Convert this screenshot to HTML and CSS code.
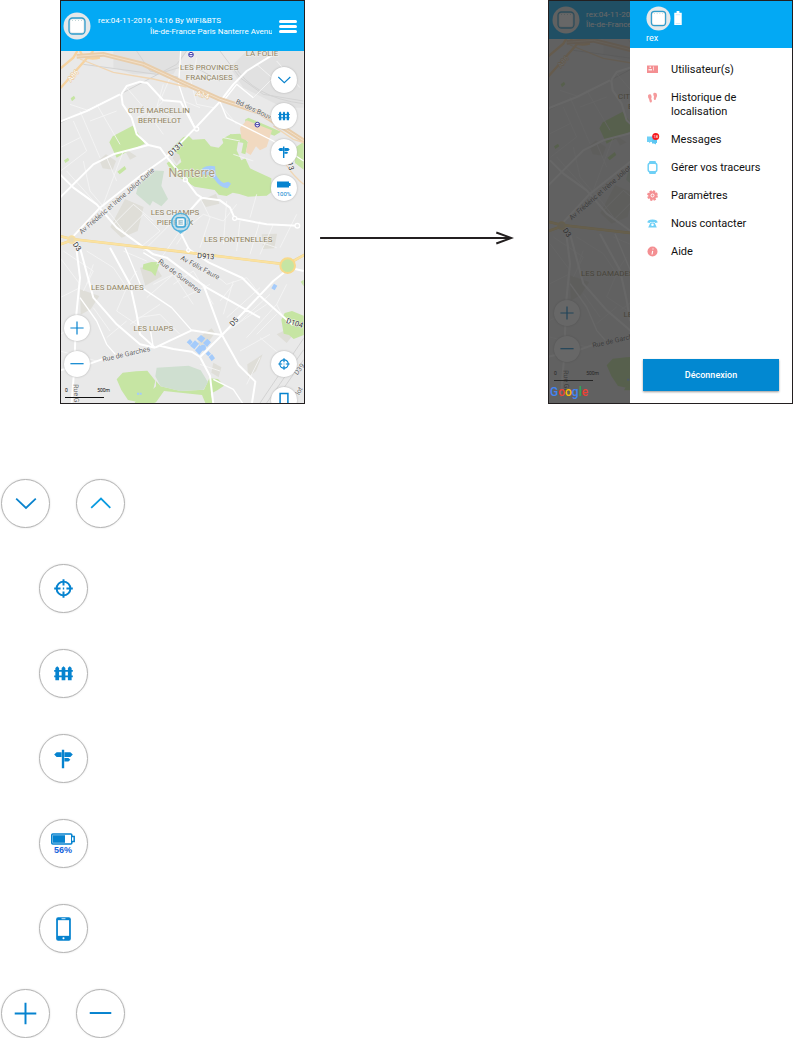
FILE: index.html
```html
<!DOCTYPE html>
<html lang="fr">
<head>
<meta charset="utf-8">
<meta name="viewport" content="width=device-width, initial-scale=1">
<title>rex</title>
<link rel="stylesheet" href="styles.css">
</head>
<body>
<svg class="defs" aria-hidden="true">
  <defs>
    <g id="tracker">
      <circle cx="14" cy="14" r="13.5" fill="#e4e8ea"/>
      <rect x="6" y="6" width="16" height="16" rx="3.500" fill="#dfe6e9" stroke="#2d9ccc" stroke-width="1.300"/>
      <rect x="7.500" y="7.500" width="13" height="13" rx="2" fill="#fff"/>
      <path d="M9 8.500h10" stroke="#9bb" stroke-width=".6" stroke-dasharray="1 2"/>
    </g>
    <g id="down"><path d="M15.500 19.500l10 9.500l10-9.500" fill="none" stroke="#0a83cd" stroke-width="1.800"/></g>
    <g id="up"><path d="M15.500 29l10-9.500l9.500 9.500" fill="none" stroke="#0a9be0" stroke-width="1.800"/></g>
    <g id="target" fill="none" stroke="#0683cf" stroke-width="2"><circle cx="25" cy="24.500" r="7"/><path d="M25 15v6.500M25 27.500v6.500M15.500 24.500h6.500M28 24.500h6.500M24.300 24.500h1.400"/></g>
    <g id="fence" fill="#0683cf"><path d="M16.700 31.500V19l1.900-2l1.900 2V31.500zM23.100 31.500V19l1.900-2l1.900 2V31.500zM29.500 31.500V19l1.900-2l1.900 2V31.500z"/><path d="M15.500 21h19v1.800h-19zM15.500 26.500h19v1.800h-19z"/></g>
    <g id="sign"><path d="M18 18h5v5h-5l-2.500-2.500zM26 18h6l2.500 2.500L32 23h-6zM26 24h4l2 1.800l-2 1.800h-4zM23.300 15.500h2.400V34.500h-2.400z" fill="#0683cf"/></g>
    <g id="phone"><rect x="17.500" y="13" width="15" height="24" rx="2" fill="#0683cf"/><path d="M19.300 16h11.400v16H19.300z" fill="#fff"/><path d="M23 14.500h4" stroke="#fff" stroke-width=".8"/><rect x="24" y="33.500" width="2" height="2" rx=".8" fill="#fff"/></g>
    <g id="plus"><path d="M25 13.500v22M14 24.500h22" stroke="#0683cf" stroke-width="2"/></g>
    <g id="minus"><path d="M14 24h22" stroke="#0683cf" stroke-width="2"/></g>

    <g id="map">
      <path d="M0 100H760V1260H0z" fill="#e9e9e9"/>
      <g transform="translate(15 153)">
        <path d="M160 0h220l-40 70-120 0-60-20zM560 0h170v170l-60 0-120-60-40-60z" fill="#e1e1e1"/>
        <g fill="#dfded8">
          <path d="M118 326l20-16 30 20-10 26-30-4zM195 444l56 24-18 72-48 20-34-32zM240 650l44-8 22 34-50 28zM60 715l58 20-26 40-30 16zM415 860l40-28 10 14-30 40-20-4zM562 940l46-30-20 50-24 20zM460 935l24 14-8 30-22-14zM605 550l46-2-8 44-34 2zM424 448l44-20 10 30-40 10zM650 850l40-20 14 16-24 30zM190 290l40 26-20 10zM350 290l20 20-20 30-12-18z"/>
        </g>
        <g fill="#c6e5a3">
          <path d="M148 274l10-18 60-32 16 22 20 32-56 26-28 16zM32 142l10-8 4 8-10 9zM12 328l12-8 4 8-12 8zM172 362l22-17 5 9-20 16z"/>
          <path d="M370 258l16-4 12 12 36-2 18 22 24 4 14-14-4-12 26-14 24 14-6 34 14 30 12-6 14 30 64 30 0 42-14 10-56 3-26-8-20-4-18 10-24-4-12-14-60-10-66-40-18-30 10-8 20 16 14-12-6-22-26-16z"/>
          <path d="M510 250l30-2 24 26-8 36-12-4 6-30-40-8zM705 290l26-18v84l-26-20zM555 206l10-6 98 42-20 12-84-32z"/>
          <path d="M250 640l24-7 26 1-8 22-6 20-12-14-26-8z"/>
          <path d="M664 806l10-20 22-6 35 14v58l-30 12-14-12-16-4z"/>
          <path d="M170 985l18-20 40-4 34-2 24 30-8 34-14 20-20 12-40-8-20-30zM288 990l14 16 60 14 70-4 16-34 26 2 18 20-20 14-20 10 8 28h-24l-10-24-114-12-24 34-16 6h-50l10-20 34-12 22-22z"/>
          <path d="M722 692l9-6v20z"/>
        </g>
        <path d="M268 358l44 2-8 44 20 40-20 22-26-16-8 14-42-36 6-22zM290 950l96-6 36 14 22 36-14 22-70 4-58-14-16-30z" fill="#cfdfd0"/>
        <path d="M540 230l20-22 76 30-16 50-20 10-12-12-16 26-14-8 6-34-20-8z" fill="#f1d9c0"/>
        <g fill="#a4cbfb">
          <path d="M427 352q14-12 38-6l2 24q8 18 24 26l14-4 8 6-10 14q-24-2-40-28l-16-12-22-2z"/>
          <path d="M634 712l8-14 10 6-8 14zM380 874l10-10 8 9-8 10zM390 884l15-16 12 10-14 17zM405 898l14-16 12 12-13 17zM410 864l13-12 13 10-11 13zM429 876l13-13 11 11-12 14zM437 908l8-8 8 8-8 8zM446 918l10-9 9 13-10 9z"/>
          <circle cx="429" cy="890" r="9"/><path d="M231 1025h6v6h-6zM239 1025h6v6h-6z"/>
        </g>
        <g fill="none" stroke="#d3d3d3" stroke-width="3">
          <path d="M0 216L180 130 350 40 380 0M70 40l220 30 100-30 90 50M480 0l60 80 70 50 120 20M520 40q60 100 210 118M230 0l40 60 90 20M600 1056l131-194M620 1056l111-160M640 1056l91-130"/>
        </g>
        <g fill="none" stroke="#f5f5f5" stroke-width="2.500">
          <path d="M40 210l40 90-78 60M60 180l60 140M110 160l70 120M0 290l60-30M70 330l20 90 60 70M20 360l90 100M140 320l30 70M190 300l-60 160 60 80M140 480l40-30 60-60M160 520l60-60 60 50M190 550l60-60 50 50-60 50M250 600l110-110M290 640l70-100M340 480l50 40-40 60M420 440l-60 70M370 540l60-50 60 20 40-50M420 440l30 60-30 90M500 450l-10 130M540 510l-10 90M600 510l-30 100M560 560l90 30M640 520l-40 90M660 590l50-100M590 430l-20 70"/>
          <path d="M0 620l60 80M0 740l60-30M10 600l90 60-30 60M80 600l80 50 40 60-30 70 60 40M100 640l-20 60M190 600l70 30M230 660l-40 60M280 700l60-30 60 90M260 740l80-70M300 760l-90 60M340 700l60-40 60 100M370 740l80-40M440 650l60 50 60-20 40 50M480 750l40-50M500 800l100-90M520 830l110-100M560 860l90-100 20 40M500 840l120-80M540 900l90-50M590 850l60-60M600 860l60 50M360 850l-60-60-70 10M140 860l60-50M150 840l-50-70M0 850l60-30M0 900l110 30M520 690l-30 100M420 940l60 20M560 1000l40-80M680 700l-30 60"/>
          <path d="M200 110l60 70 50 70M230 200l60-30 20-70M300 180l60 30M310 150l-50 50M330 80l-30 70M390 80l20 80 50 10M370 150l50 20M410 20l-10 60M480 160l50 60M590 40l80 70 30-20M640 80l-60 60M650 30l70 80M30 160l60 20M90 210l80-30M490 260l50 10M520 310l60 20"/>
        </g>
        <g fill="none" stroke="#fff" stroke-linejoin="round">
          <path stroke-width="6" d="M-10 450L100 340 160 310 265 282 300 290 320 318 376 385 410 430 425 440 480 448 510 470 524 502 620 520 712 524M265 282L230 250 215 200 188 160 184 130 200 105 240 92 262 96 310 148 362 152 405 232M-10 216L80 180 180 130"/>
          <path stroke-width="6" d="M36 560L120 470 240 375 320 318 405 232 480 152 520 100 560 60 640 10M0 370l40 40 70 50 60 70 110 80 40 10 120 90 160 90M425 440L365 506M362 545l25 50 60 40 100 46 60 60 90 80M731 660L690 650 640 690 486 852 420 918M430 700l56 152 50 90 50 50-10 64M285 890L395 838 486 852M285 890L300 884 340 894 395 902 420 918 450 975 460 1060M285 890L240 850 230 790 210 700 150 590M285 890L240 880 170 820 100 740 60 590 36 565M-10 960L90 938 140 920M50 600l10 80-12 120-5 150-10 130"/>
          <path stroke-width="4" d="M60 740l50 70 30 70 26 30M195 590l50 120 90 60 60 68M280 890l-10-60M362 0l-6 100 30 90 19 42M480 152L500 200 640 270 731 330M490 150L530 100 580 140M460 985l60 30 30 45M250 605l50 30"/>
        </g>
        <g fill="none">
          <path d="M-15 130L100 0M-15 66L40 20 52 0M60 0q10 30 60 20" stroke="#f6d3a0" stroke-width="7"/>
          <path d="M50 16L130 10 250 40 380 100 480 145 600 185 740 275" stroke="#e8cdab" stroke-width="14"/>
          <path d="M50 16L130 10 250 40 380 100 480 145 600 185 740 275" stroke="#f3e0c8" stroke-width="3"/>
          <path d="M60 24l100 40 120 20 100 24M640 225l60 40 31 10M660 290q10 60 71 110" stroke="#f0d6b4" stroke-width="4"/>
          <path d="M-15 552L35 564 380 604 660 638 700 630 745 605M-15 586L35 568" stroke="#f0d48c" stroke-width="8"/>
          <path d="M-15 552L35 564 380 604 660 638 700 630 745 605M-15 586L35 568" stroke="#fbe2a0" stroke-width="6"/>
          <circle cx="683" cy="644" r="22" fill="#c6e5a3" stroke="#f8d98a" stroke-width="6"/>
          <circle cx="35" cy="566" r="10" fill="#e8dcb8" stroke="#f5dfa6" stroke-width="6"/>
        </g>
        <g fill="#e9e9e9" stroke="#fff" stroke-width="4"><circle cx="524" cy="502" r="6"/><circle cx="712" cy="524" r="7"/><circle cx="376" cy="386" r="6"/><circle cx="385" cy="598" r="5"/><circle cx="410" cy="234" r="6"/></g>
      </g>
      <g fill="#fff" stroke="#3a35a8" stroke-width="3"><circle cx="408" cy="164" r="7"/><path d="M402 164h12"/><circle cx="607" cy="374" r="7"/><path d="M601 374h12"/></g>
      <g class="district">
        <text x="621" y="168">LA FOLIE</text>
        <text x="463" y="210">LES PROVINCES</text><text x="463" y="241">FRANÇAISES</text>
        <text x="312" y="338">CITÉ MARCELLIN</text><text x="314" y="370">BERTHELOT</text>
        <text x="360" y="645">LES CHAMPS</text><text x="360" y="676">PIERREUX</text>
        <text x="550" y="727">LES FONTENELLES</text>
        <text x="187" y="870">LES DAMADES</text>
        <text x="295" y="993">LES LUAPS</text>
        <text class="city" x="410" y="532">Nanterre</text>
      </g>
      <g class="street">
        <text transform="translate(190 608) rotate(-41)">Av Frédéric et Irène Joliot Curie</text>
        <text transform="translate(432 809) rotate(28)">Av Félix Faure</text>
        <text transform="translate(370 834) rotate(37)">Rue de Suresnes</text>
        <text transform="translate(215 1069) rotate(-13)">Rue de Garches</text>
        <text transform="translate(57 1186) rotate(88)">Rue Ga</text>
        <text transform="translate(606 340) rotate(25)">Bd des Bouvets</text>
        <text transform="translate(738 1112) rotate(-52)">D39</text>
        <text transform="translate(738 1176) rotate(-62)">lot</text>
      </g>
      <g class="route">
        <text transform="translate(367 452) rotate(-42)">D131</text>
        <text transform="translate(60 744) rotate(55)">D3</text>
        <text transform="translate(452 776) rotate(4)">D913</text>
        <text transform="translate(542 970) rotate(-48)">D5</text>
        <text transform="translate(717 976) rotate(18)">D104</text>
        <text transform="translate(700 500) rotate(75)">13</text>
        <text class="motorway" transform="translate(60 232) rotate(-48)">A86</text>
        <text class="motorway" transform="translate(441 292) rotate(18)">A14</text>
      </g>
    </g>
  </defs>
</svg>

<main>
  <section class="screens">
    <div class="phone">
      <header class="topbar">
        <svg class="avatar" viewBox="0 0 28 28" aria-hidden="true"><use href="#tracker"/></svg>
        <div class="status"><p>rex:04-11-2016 14:16 By WIFI&amp;BTS</p><p class="address">Île-de-France Paris Nanterre Avenue</p></div>
        <button class="burger" aria-label="Menu"><span></span><span></span><span></span></button>
      </header>
      <div class="mapview">
        <svg class="map" viewBox="18 153 729 1056" preserveAspectRatio="xMidYMid slice">
          <use href="#map"/>
          <path d="M363 690h28l-14 12z" fill="#54b4dc" fill-opacity=".9"/>
          <circle cx="377" cy="667" r="27" fill="#a9d6ea" fill-opacity=".65" stroke="#4fb0dc" stroke-width="4"/>
          <rect x="363" y="653" width="28" height="28" rx="6" fill="none" stroke="#3ba5d6" stroke-width="4"/>
          <rect x="368" y="658" width="18" height="18" rx="2" fill="none" stroke="#fff" stroke-width="3"/>
        </svg>
        <div class="stack tools">
          <button class="round" aria-label="Dérouler"><svg viewBox="0 0 50 49"><use href="#down"/></svg></button>
          <button class="round" aria-label="Zones"><svg viewBox="0 0 50 49"><use href="#fence"/></svg></button>
          <button class="round" aria-label="Itinéraire"><svg viewBox="0 0 50 49"><use href="#sign"/></svg></button>
          <button class="round charge"><svg viewBox="0 0 14 7"><path d="M0 .5h12v1.500h1.500v3H12V6.500H0z" fill="#0683cf"/></svg><span>100%</span></button>
        </div>
        <div class="stack zoomer">
          <button class="round" aria-label="Zoom avant"><svg viewBox="0 0 50 49"><use href="#plus"/></svg></button>
          <button class="round" aria-label="Zoom arrière"><svg viewBox="0 0 50 49"><use href="#minus"/></svg></button>
        </div>
        <div class="stack locate">
          <button class="round" aria-label="Localiser"><svg viewBox="0 0 50 49"><use href="#target"/></svg></button>
          <button class="round" aria-label="Téléphone"><svg viewBox="0 0 50 49"><path d="M18.500 38V13.500h13V38" fill="none" stroke="#0683cf" stroke-width="2.500"/></svg></button>
        </div>
        <div class="scale"><span>0</span><span>500m</span></div>
      </div>
    </div>

    <svg class="arrow" viewBox="0 0 194 14" aria-hidden="true"><path d="M0 7h190" stroke="#231f20" stroke-width="2"/><path d="M176 1.500L191 7l-15 5.500" fill="none" stroke="#231f20" stroke-width="2"/></svg>

    <div class="phone drawer-open">
      <div class="behind">
        <header class="topbar">
          <svg class="avatar" viewBox="0 0 28 28" aria-hidden="true"><use href="#tracker"/></svg>
          <div class="status"><p>rex:04-11-2016 14:16</p><p>Île-de-France Paris</p></div>
        </header>
        <div class="mapview">
          <svg class="map" viewBox="12 159 243 1092" preserveAspectRatio="xMinYMin slice"><use href="#map"/></svg>
          <div class="stack zoomer">
            <button class="round" aria-label="Zoom avant"><svg viewBox="0 0 50 49"><use href="#plus"/></svg></button>
            <button class="round" aria-label="Zoom arrière"><svg viewBox="0 0 50 49"><use href="#minus"/></svg></button>
          </div>
          <div class="scale"><span>0</span><span>500m</span></div>
        </div>
        <div class="shade"></div>
        <div class="google"><span class="b">G</span><span class="r">o</span><span class="y">o</span><span class="b">g</span><span class="g">l</span><span class="r">e</span></div>
      </div>
      <aside class="drawer">
        <header class="profile">
          <div class="badges">
            <svg class="avatar" viewBox="0 0 28 28" aria-hidden="true"><use href="#tracker"/></svg>
            <svg class="cell" viewBox="0 0 8 15" aria-hidden="true"><path d="M2.500 0h3v2H8v13H0V2h2.500z" fill="#fff"/><path d="M1.500 4h5M1.500 13.500h5" stroke="#b5dff5" stroke-width=".7"/></svg>
          </div>
          <p>rex</p>
        </header>
        <nav class="menu">
          <a href="#u"><svg viewBox="0 0 11 11"><path d="M0 1.500h11v7.500H0z" fill="#f48f92"/><path d="M2.500 2.500h1.500v1.500H2.500zM1.500 5h3.500v1.500H1.500zM6 2.500h.8v4H6z" fill="#fff" fill-opacity=".8"/></svg>Utilisateur(s)</a>
          <a href="#h"><svg viewBox="0 0 11 11"><g fill="#f59a9c"><path d="M1 3.500q1-2 3-1q1 2 .2 4l.8 2.500q-.6 2.500-2.200 1L2 7Q.8 5.500 1 3.500zM6.500 1q2-1 3.300.8q.8 2.200-.6 4.200L8.500 8Q6.800 8.500 6.700 6.500l.3-2Q5.800 2.500 6.500 1z"/></g></svg>Historique de localisation</a>
          <a href="#m"><svg viewBox="0 0 11 11"><path d="M0 2.500h8v5.500H3.500L2 9V8H0z" fill="#6fd0f6"/><path d="M5 5h5v4H9v1.500L7 9.500H5z" fill="#5cc6f2"/><circle cx="8.700" cy="2.600" r="3.500" fill="#f5191c"/><text class="count" x="8.700" y="4">18</text></svg>Messages</a>
          <a href="#t"><svg viewBox="0 0 11 11"><path d="M2.500-1h6l.8 2.500H1.700zM2.500 12h6l.8-2.500H1.700z" fill="#6fd0f6"/><rect x="1.200" y="1.200" width="8.600" height="8.600" rx="2" fill="#fff" stroke="#6fd0f6" stroke-width="1.500"/></svg>Gérer vos traceurs</a>
          <a href="#p"><svg viewBox="0 0 11 11"><circle cx="5.500" cy="5.500" r="4.500" fill="none" stroke="#f48f92" stroke-width="1.800" stroke-dasharray="2.200 1.330"/><circle cx="5.500" cy="5.500" r="4.200" fill="#f48f92"/><circle cx="5.500" cy="5.500" r="1.500" fill="#f48f92" stroke="#fff"/></svg>Paramètres</a>
          <a href="#n"><svg viewBox="0 0 11 11"><path d="M.3 4.500Q.5 1.500 5.500 1.500t5.200 3L8 5V4H3v1zM3.500 4.500h4l2.300 5H1.200z" fill="#6fd0f6"/><circle cx="5.500" cy="6.800" r="1.300" fill="#fff"/></svg>Nous contacter</a>
          <a href="#a"><svg viewBox="0 0 11 11"><circle cx="5.500" cy="5.500" r="5" fill="#f48f92"/><path d="M6 2.500v1M5.700 4.800L5 8.500" stroke="#fff" stroke-width="1.100"/></svg>Aide</a>
        </nav>
        <button class="logout">Déconnexion</button>
      </aside>
    </div>
  </section>

  <section class="legend">
    <div class="pair"><div class="disc"><svg viewBox="0 0 50 49"><use href="#down"/></svg></div><div class="disc"><svg viewBox="0 0 50 49"><use href="#up"/></svg></div></div>
    <div class="pair"><div class="disc"><svg viewBox="0 0 50 49"><use href="#target"/></svg></div></div>
    <div class="pair"><div class="disc"><svg viewBox="0 0 50 49"><use href="#fence"/></svg></div></div>
    <div class="pair"><div class="disc"><svg viewBox="0 0 50 49"><use href="#sign"/></svg></div></div>
    <div class="pair"><div class="disc level"><svg viewBox="0 0 24 12"><rect x=".8" y="1" width="20" height="10" rx="1" fill="#fff" stroke="#0683cf" stroke-width="1.600"/><path d="M2 2.200h12v7.600H2z" fill="#0683cf"/><path d="M21 3.500h2.200v5H21" fill="#fff" stroke="#0683cf" stroke-width="1.500"/></svg><span>56%</span></div></div>
    <div class="pair"><div class="disc"><svg viewBox="0 0 50 49"><use href="#phone"/></svg></div></div>
    <div class="pair"><div class="disc"><svg viewBox="0 0 50 49"><use href="#plus"/></svg></div><div class="disc"><svg viewBox="0 0 50 49"><use href="#minus"/></svg></div></div>
  </section>
</main>
</body>
</html>
```

FILE: styles.css
```css
* { box-sizing: border-box; }
body { margin: 0; background: #fff; font-family: Roboto, "Liberation Sans", sans-serif; color: #1c1c1c; }
p { margin: 0; }
button { border: 0; padding: 0; font: inherit; cursor: pointer; }
.defs { position: absolute; width: 0; height: 0; }

.screens { display: grid; grid-template-columns: minmax(0, 245fr) minmax(0, 243fr) minmax(0, 245fr); padding-left: 60px; align-items: start; }
.phone { display: flex; flex-direction: column; aspect-ratio: 245 / 404; border: 1px solid #231f20; overflow: hidden; }
.arrow { display: block; align-self: center; margin-left: 15px; width: 80%; margin-top: 72px; }

.topbar { display: flex; align-items: center; gap: 7px; height: 50px; flex: none; padding: 0 7px 0 2px; background: #03a9f4; color: #fff; overflow: hidden; }
.avatar { width: 28px; height: 28px; flex: none; display: block; }
.status { flex: 1; min-width: 0; font-size: 8px; line-height: 11px; white-space: nowrap; overflow: hidden; }
.address { margin-left: 52px; overflow: hidden; }
.burger { display: flex; flex-direction: column; gap: 2px; width: 18px; background: none; }
.burger span { height: 3px; border-radius: 2px; background: #fff; }

.mapview { position: relative; flex: 1; min-height: 0; overflow: hidden; background: #e8e8e8; }
.map { display: block; width: 100%; height: 100%; }
.district text { font-size: 24px; fill: #8f8261; text-anchor: middle; paint-order: stroke; stroke: #f1f1ef; stroke-width: 3px; }
.district .city { font-size: 36px; fill: #a89a7d; }
.street text { font-size: 21px; fill: #666; text-anchor: middle; paint-order: stroke; stroke: #f4f4f4; stroke-width: 3px; }
.route text { font-size: 22px; fill: #333; text-anchor: middle; paint-order: stroke; stroke: #f4f4f4; stroke-width: 3px; }
.route .motorway { fill: #fff; stroke: #e9c899; }

.stack { position: absolute; display: flex; flex-direction: column; gap: 10px; }
.tools { top: 16px; right: 7px; }
.zoomer { left: 3px; bottom: 26px; }
.locate { right: 7px; bottom: -10px; }
.round { display: flex; flex-direction: column; align-items: center; justify-content: center; width: 26px; height: 26px; border-radius: 50%; background: #fff; box-shadow: 0 0 2px #aaa; }
.round svg { width: 30px; height: 30px; flex: none; display: block; stroke-linecap: butt; }
.charge .level, .charge svg { width: 14px; height: 7px; margin-top: 3px; }
.charge span { font-size: 6px; line-height: 8px; margin-top: 2px; color: #0683cf; }
.scale { position: absolute; left: 4px; bottom: 5px; width: 39px; height: 12px; display: flex; justify-content: space-between; border-bottom: 1px solid #111; font-size: 5px; line-height: 8px; color: #111; }
.scale span:last-child { margin-right: -6px; }

.drawer-open { display: grid; grid-template-columns: minmax(0, 1fr) minmax(0, 2fr); }
.behind { position: relative; display: flex; flex-direction: column; min-width: 0; overflow: hidden; }
.behind .topbar { height: 38px; padding: 0 0 0 3px; gap: 6px; }
.behind .status { line-height: 10px; }
.behind .zoomer { left: 5px; bottom: 41px; }
.behind .scale { left: 5px; bottom: 22px; }
.shade { position: absolute; inset: 0; background: rgba(45, 45, 45, .72); }
.google { position: absolute; left: 1px; bottom: 4px; font-size: 12px; line-height: 14px; font-weight: 500; }
.b { color: #4285f4; } .r { color: #ea4335; } .y { color: #fbbc05; } .g { color: #34a853; }

.drawer { display: flex; flex-direction: column; min-width: 0; background: #fff; }
.profile { flex: none; height: 47px; padding: 4px 16px 0; background: #03a9f4; color: #fff; font-size: 9px; line-height: 14px; }
.badges { display: flex; align-items: center; gap: 3px; height: 26px; }
.badges .avatar { width: 25px; height: 25px; }
.cell { width: 8px; height: 14px; }
.menu { display: flex; flex-direction: column; gap: 14px; padding: 15px 16px 0 17px; flex: 1; }
.menu a { display: flex; gap: 12px; color: #111; text-decoration: none; font-size: 11px; line-height: 14px; }
.menu svg { width: 11px; height: 11px; flex: none; margin: 1px 1px 0 0; overflow: visible; }
.count { font-size: 4px; fill: #fff; text-anchor: middle; }
.logout { margin: 0 13px 12px; height: 32px; background: #0288d1; color: #fff; font-size: 9px; font-weight: 500; box-shadow: 0 1px 2px #999; }

.legend { display: flex; flex-direction: column; align-items: flex-start; gap: 36px; padding: 75px 0 0 1px; }
.pair { display: flex; justify-content: center; gap: 26px; width: 124px; }
.disc { display: flex; flex-direction: column; align-items: center; justify-content: center; width: 49px; height: 49px; border: 1px solid #b4b4b4; border-radius: 50%; box-shadow: 0 0 2px #ddd; background: #fff; }
.disc svg { width: 49px; height: 49px; flex: none; display: block; }
.level svg { width: 24px; height: 12px; }
.level span { font-family: "Liberation Sans", sans-serif; font-size: 9px; line-height: 10px; color: #1463dc; font-weight: 700; }
```
